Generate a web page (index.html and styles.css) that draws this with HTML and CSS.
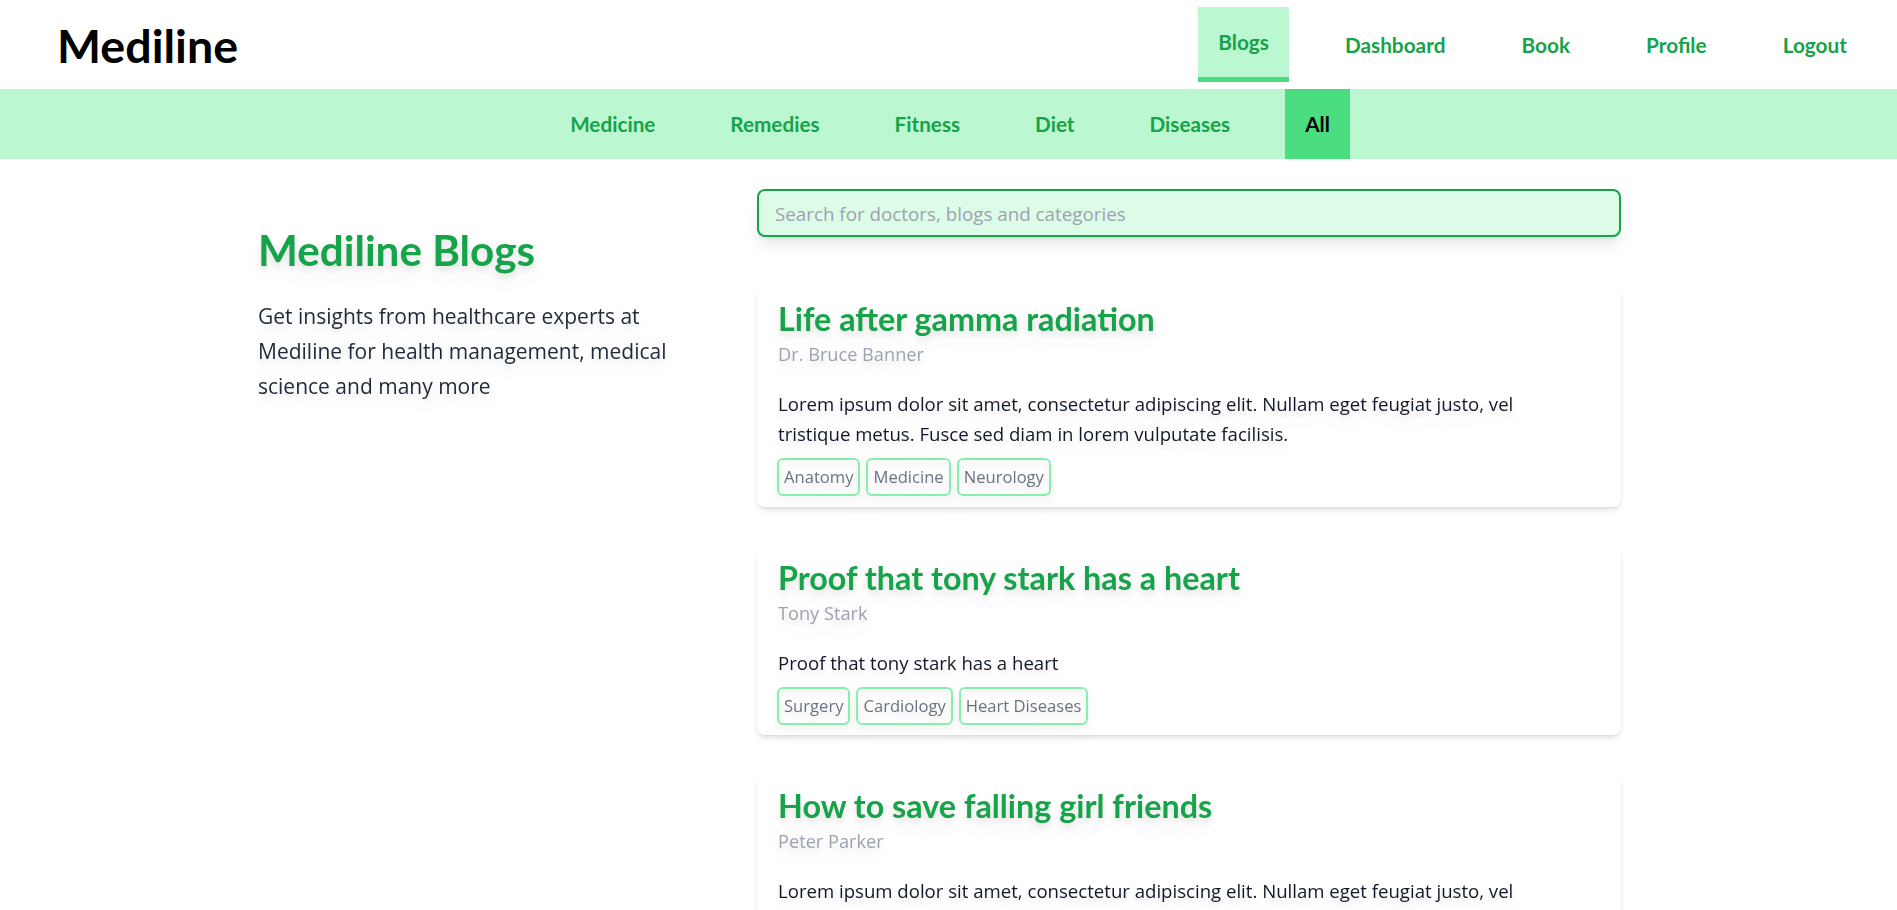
FILE: index.html
```html
<!DOCTYPE html>
<html lang="en">
<head>
<meta charset="utf-8">
<title>Mediline Blogs</title>
<link rel="stylesheet" href="styles.css">
</head>
<body>
<header class="topbar">
  <a class="logo" href="#">Mediline</a>
  <nav class="mainnav">
    <a class="navlink active" href="#">Blogs</a>
    <a class="navlink" href="#">Dashboard</a>
    <a class="navlink" href="#">Book</a>
    <a class="navlink" href="#">Profile</a>
    <a class="navlink" href="#">Logout</a>
  </nav>
</header>
<nav class="catbar">
  <a class="catlink" href="#">Medicine</a>
  <a class="catlink" href="#">Remedies</a>
  <a class="catlink" href="#">Fitness</a>
  <a class="catlink" href="#">Diet</a>
  <a class="catlink" href="#">Diseases</a>
  <a class="catlink current" href="#">All</a>
</nav>
<main class="page">
  <section class="intro">
    <h1 class="intro-title">Mediline Blogs</h1>
    <p class="intro-text">Get insights from healthcare experts at Mediline for health management, medical science and many more</p>
  </section>
  <section class="feed">
    <input class="search" type="text" placeholder="Search for doctors, blogs and categories">
    <article class="post">
      <h2 class="post-title">Life after gamma radiation</h2>
      <p class="post-author">Dr. Bruce Banner</p>
      <p class="post-body">Lorem ipsum dolor sit amet, consectetur adipiscing elit. Nullam eget feugiat justo, vel tristique metus. Fusce sed diam in lorem vulputate facilisis.</p>
      <ul class="tags">
        <li class="tag">Anatomy</li>
        <li class="tag">Medicine</li>
        <li class="tag">Neurology</li>
      </ul>
    </article>
    <article class="post">
      <h2 class="post-title">Proof that tony stark has a heart</h2>
      <p class="post-author">Tony Stark</p>
      <p class="post-body">Proof that tony stark has a heart</p>
      <ul class="tags">
        <li class="tag">Surgery</li>
        <li class="tag">Cardiology</li>
        <li class="tag">Heart Diseases</li>
      </ul>
    </article>
    <article class="post">
      <h2 class="post-title">How to save falling girl friends</h2>
      <p class="post-author">Peter Parker</p>
      <p class="post-body">Lorem ipsum dolor sit amet, consectetur adipiscing elit. Nullam eget feugiat justo, vel tristique metus. Fusce sed diam in lorem vulputate facilisis.</p>
      <ul class="tags">
        <li class="tag">Fitness</li>
        <li class="tag">Orthopedics</li>
      </ul>
    </article>
  </section>
</main>
</body>
</html>
```

FILE: styles.css
```css
html { scrollbar-width: none; }
html::-webkit-scrollbar { display: none; }
* { box-sizing: border-box; }
body {
  margin: 0;
  font-family: "Open Sans", "Noto Sans", sans-serif;
  color: #111827;
  background: #fff;
}
a { text-decoration: none; }

.topbar {
  height: 89px;
  display: flex;
  align-items: center;
  justify-content: space-between;
  padding: 0 30px 0 57px;
}
.logo {
  font-family: "Lato", sans-serif;
  font-size: 46.6px;
  line-height: 48px;
  font-weight: 700;
  color: #000;
}
.mainnav {
  display: flex;
  align-items: center;
  gap: 36px;
}
.navlink {
  display: block;
  height: 70px;
  padding: 0 20px;
  font-family: "Lato", sans-serif;
  line-height: 70px;
  font-size: 20.8px;
  font-weight: 700;
  color: #16a34a;
}
.navlink.active {
  height: 75px;
  background: #bbf7d0;
  border-bottom: 5px solid #4ade80;
}

.catbar {
  height: 70px;
  padding-left: 3px;
  background: #bbf7d0;
  display: flex;
  justify-content: center;
  gap: 35px;
}
.catlink {
  display: block;
  padding: 0 20px;
  font-family: "Lato", sans-serif;
  line-height: 70px;
  font-size: 20.7px;
  font-weight: 700;
  color: #16a34a;
}
.catlink.current {
  background: #4ade80;
  color: #000;
}

.page {
  display: flex;
  align-items: flex-start;
  gap: 59px;
  padding: 30px 0 0 258px;
}
.intro {
  width: 440px;
  padding-top: 36.5px;
}
.intro-title {
  margin: 0;
  font-family: "Lato", sans-serif;
  font-size: 42.2px;
  line-height: 48px;
  font-weight: 700;
  color: #16a34a;
  filter: drop-shadow(0 10px 8px rgba(0,0,0,.04)) drop-shadow(0 4px 3px rgba(0,0,0,.1));
}
.intro-text {
  margin: 25.5px 0 0;
  font-size: 21px;
  line-height: 35px;
  color: #1f2937;
  filter: drop-shadow(0 10px 8px rgba(0,0,0,.04)) drop-shadow(0 4px 3px rgba(0,0,0,.1));
}

.feed {
  width: 864px;
  display: flex;
  flex-direction: column;
  gap: 40px;
}
.search {
  height: 48px;
  margin: 0 0 11px;
  padding: 2px 16px 0;
  border: 2px solid #16a34a;
  border-radius: 8px;
  background: #dcfce7;
  font-family: inherit;
  font-size: 18.8px;
  color: #111827;
  outline: none;
  box-shadow: 0 10px 15px -3px rgba(0,0,0,.1), 0 4px 6px -4px rgba(0,0,0,.1);
}
.search::placeholder { color: #9ca3af; }

.post {
  background: #fff;
  border-radius: 8px;
  padding: 12px 20px 10.7px 21px;
  box-shadow: 0 4px 6px -1px rgba(0,0,0,.1), 0 2px 4px -2px rgba(0,0,0,.1), 0 0 2px rgba(0,0,0,.04);
}
.post-title {
  margin: 0;
  padding-top: 1px;
  font-family: "Lato", sans-serif;
  font-size: 32.3px;
  line-height: 36px;
  font-weight: 700;
  color: #16a34a;
  filter: drop-shadow(0 10px 8px rgba(0,0,0,.04)) drop-shadow(0 4px 3px rgba(0,0,0,.1));
}
.post-author {
  margin: 3px 0 0;
  font-size: 18.2px;
  line-height: 28px;
  color: #9ca3af;
  filter: drop-shadow(0 10px 8px rgba(0,0,0,.04)) drop-shadow(0 4px 3px rgba(0,0,0,.1));
}
.post-body {
  max-width: 780px;
  margin: 21px 0 0;
  font-size: 18.6px;
  line-height: 30px;
  color: #111827;
  filter: drop-shadow(0 10px 8px rgba(0,0,0,.04)) drop-shadow(0 4px 3px rgba(0,0,0,.1));
}
.tags {
  display: flex;
  gap: 6px;
  margin: 9px 0 0 -1px;
  padding: 0;
  list-style: none;
  filter: drop-shadow(0 10px 8px rgba(0,0,0,.04)) drop-shadow(0 4px 3px rgba(0,0,0,.1));
}
.tag {
  padding: 4px 5px;
  border: 2px solid #86efac;
  border-radius: 6px;
  font-size: 16.6px;
  line-height: 26px;
  color: #6b7280;
}
```
